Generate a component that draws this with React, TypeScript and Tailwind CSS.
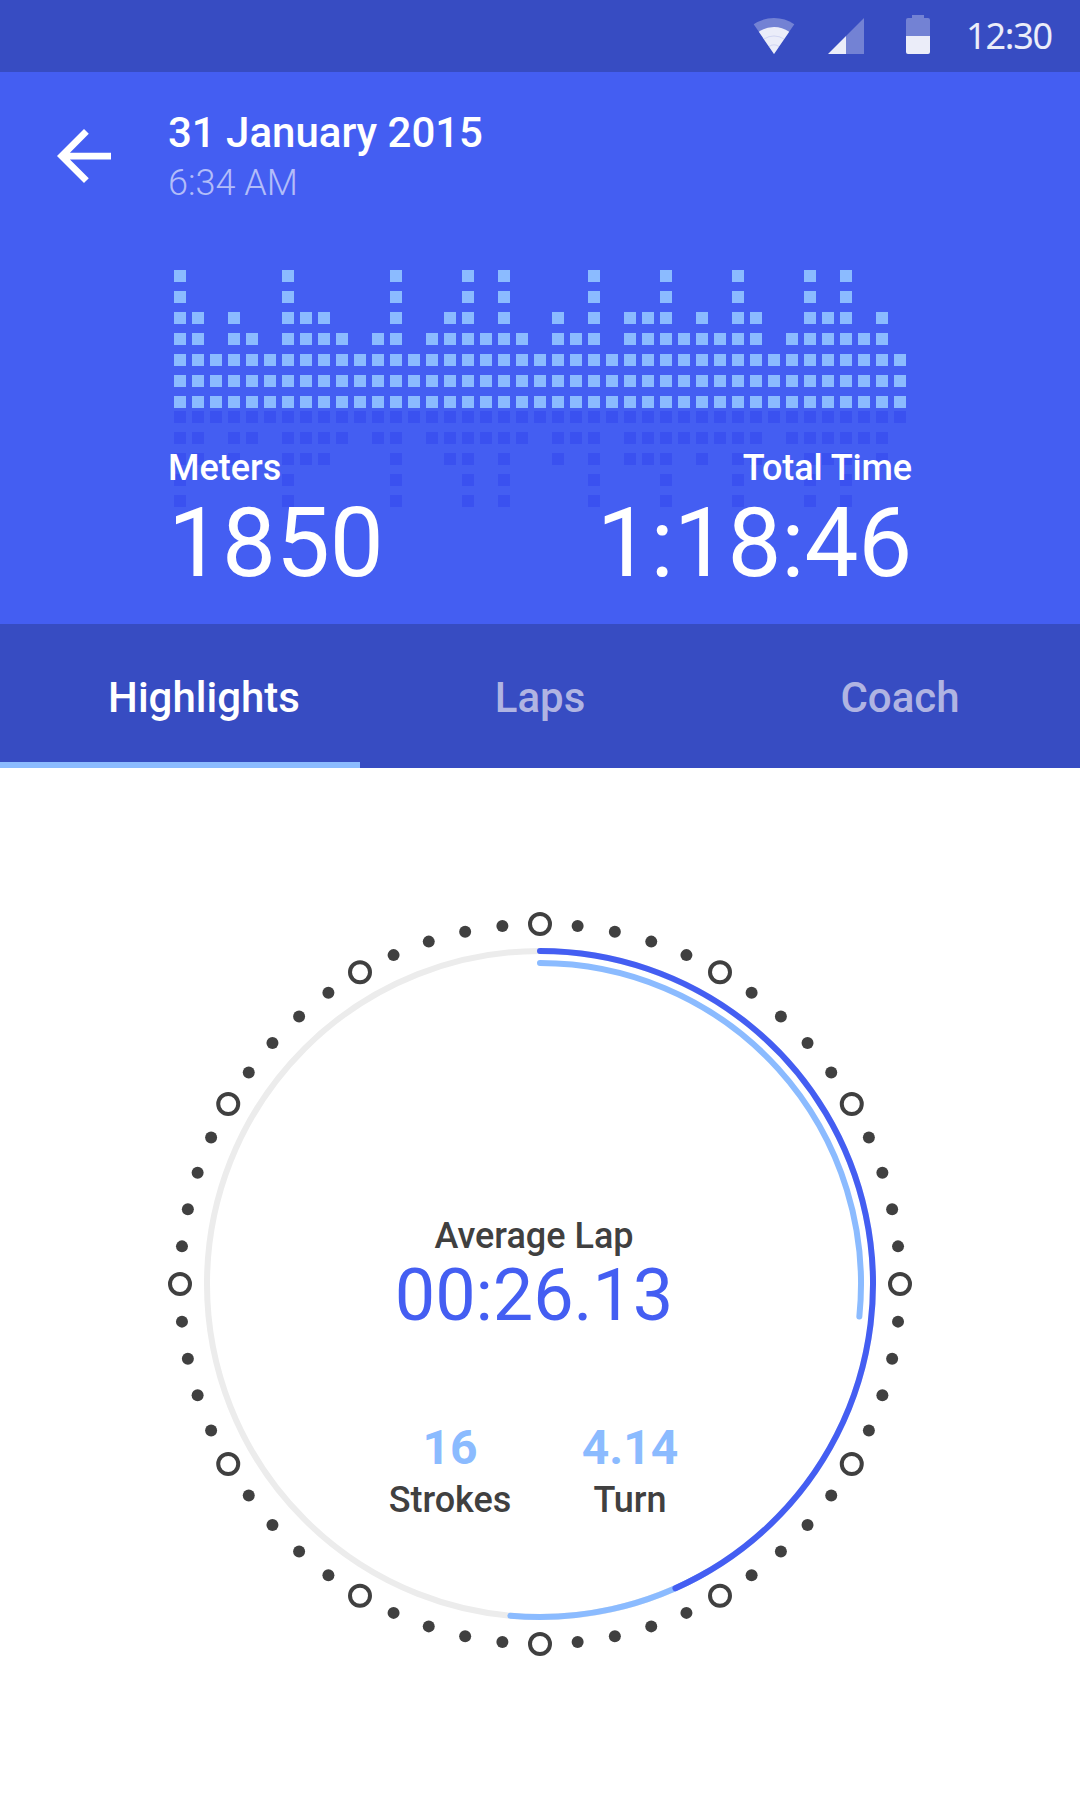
import { useState } from 'react'

const TABS = ['Highlights', 'Laps', 'Coach']

// height of every column in the activity chart, in blocks
const ACTIVITY = [
  7, 5, 3, 5, 4, 3, 7, 5, 5, 4, 3, 4, 7, 3, 4, 5, 7, 4, 7, 4, 3,
  5, 4, 7, 3, 5, 5, 7, 4, 5, 4, 7, 5, 3, 4, 7, 5, 7, 4, 5, 3,
]

const CENTER = 372

function pointAt(angle: number, radius: number) {
  const rad = (angle * Math.PI) / 180
  return { x: CENTER + radius * Math.sin(rad), y: CENTER - radius * Math.cos(rad) }
}

function arc(from: number, to: number, radius: number) {
  const a = pointAt(from, radius)
  const b = pointAt(to, radius)
  const large = to - from > 180 ? 1 : 0
  return `M${a.x} ${a.y}A${radius} ${radius} 0 ${large} 1 ${b.x} ${b.y}`
}

function StatusBar() {
  return (
    <div className="flex h-[72px] items-start justify-end bg-[#374cc2] pr-7">
      <svg className="h-[72px] w-[42px]" viewBox="0 0 42 72" fill="#fff">
        <path d="M21 54L0.7 24.3A36 36 0 0 1 41.3 24.3Z" opacity="0.3" />
        <path d="M21 54L5.8 31.7A27 27 0 0 1 36.2 31.7Z" opacity="0.86" />
        <path
          d="M11 39A18 18 0 0 1 31 39M16 46.5A9 9 0 0 1 26 46.5"
          fill="none"
          stroke="#374cc2"
          strokeWidth="0.5"
          opacity="0.3"
        />
      </svg>
      <svg className="ml-[33px] h-[72px] w-9" viewBox="0 0 36 72" fill="#fff">
        <path d="M18 36L36 18V54H18Z" opacity="0.3" />
        <path d="M0 54L18 36V54Z" opacity="0.9" />
      </svg>
      <svg className="ml-[42px] h-[72px] w-6" viewBox="0 0 24 72" fill="#fff">
        <path d="M6 15H18V18H22A2 2 0 0 1 24 20V36H0V20A2 2 0 0 1 2 18H6Z" opacity="0.3" />
        <path d="M0 36H24V52A2 2 0 0 1 22 54H2A2 2 0 0 1 0 52Z" opacity="0.9" />
      </svg>
      <span className="ml-9 w-[86px] font-['Noto_Sans',sans-serif] text-[36px] leading-[72px] tracking-[-1.2px] text-white/90">
        12:30
      </span>
    </div>
  )
}

function ActivityChart() {
  return (
    <svg className="ml-1.5 h-[237px] w-[732px] [grid-area:1/1]" viewBox="0 0 732 237" shapeRendering="crispEdges">
      {ACTIVITY.map((height, col) => (
        <g key={col}>
          {Array.from({ length: height }, (_, row) => (
            <rect key={row} x={col * 18} y={126 - row * 21} width="12" height="12" fill="#8bbbff" />
          ))}
          {Array.from({ length: height - 2 }, (_, row) => (
            <rect key={row} x={col * 18} y={141 + row * 21} width="12" height="12" fill="#3a51f0" />
          ))}
        </g>
      ))}
    </svg>
  )
}

function LapDial() {
  const marks = Array.from({ length: 60 }, (_, i) => i)

  return (
    <svg className="size-[744px] [grid-area:1/1]" viewBox="0 0 744 744" fill="none">
      <circle cx={CENTER} cy={CENTER} r="333" stroke="#ececec" strokeWidth="6" />
      <g strokeWidth="6" strokeLinecap="round">
        <path d={arc(150, 185.1, 333)} stroke="#8bbbff" />
        <path d={arc(0, 156, 333)} stroke="#445ef2" />
        <path d={arc(0, 95.8, 321)} stroke="#8bbbff" />
      </g>
      {marks.map((i) => {
        const { x, y } = pointAt(i * 6, 360)
        return i % 5 === 0 ? (
          <circle key={i} cx={x} cy={y} r="10" stroke="#404040" strokeWidth="4" />
        ) : (
          <circle key={i} cx={x} cy={y} r="6" fill="#404040" />
        )
      })}
    </svg>
  )
}

function Stat({ value, label }: { value: string; label: string }) {
  return (
    <div className="w-[180px] text-center">
      <p className="text-5xl leading-[54px] font-bold text-[#8bbbff]">{value}</p>
      <p className="mt-1 text-4xl leading-[42px] font-medium text-[#404040]">{label}</p>
    </div>
  )
}

export default function App() {
  const [activeTab, setActiveTab] = useState('Highlights')

  return (
    <div className="flex h-[1798px] w-[1080px] flex-col overflow-hidden bg-white font-[Roboto,sans-serif]">
      <StatusBar />

      <header className="h-[552px] bg-[#445ef2] text-white">
        <div className="flex h-[198px] items-start pt-[37px] pl-[57px]">
          <button type="button" aria-label="Back" className="mt-5">
            <svg className="size-[54px]" viewBox="4 4 16 16" fill="currentColor">
              <path d="M20 11H7.83l5.59-5.59L12 4l-8 8 8 8 1.41-1.41L7.83 13H20v-2z" />
            </svg>
          </button>
          <div className="ml-[57px]">
            <h1 className="text-[42px] leading-[48px] font-medium tracking-[-0.02px]">31 January 2015</h1>
            <p className="mt-[5px] text-4xl leading-[42px] font-light text-white/60">6:34 AM</p>
          </div>
        </div>

        <div className="mx-[168px] grid">
          <ActivityChart />
          <div className="mt-[177px] flex justify-between [grid-area:1/1]">
            <div>
              <p className="text-4xl leading-[42px] font-medium">Meters</p>
              <p className="mt-1.5 text-8xl leading-[96px]">1850</p>
            </div>
            <div className="text-right">
              <p className="text-4xl leading-[42px] font-medium tracking-[-0.1px]">Total Time</p>
              <p className="mt-1.5 text-8xl leading-[96px] tracking-[-0.15px]">1:18:46</p>
            </div>
          </div>
        </div>
      </header>

      <nav className="flex h-36 bg-[#374cc2]">
        {TABS.map((tab) => (
          <button
            key={tab}
            type="button"
            onClick={() => setActiveTab(tab)}
            className={
              tab === activeTab
                ? 'w-[360px] border-b-6 border-[#8bbbff] pt-[9px] pl-12 text-[42px] font-medium text-white'
                : 'w-[360px] border-b-6 border-transparent pt-[9px] text-[42px] font-medium text-[#b0b4e2]'
            }
          >
            {tab}
          </button>
        ))}
      </nav>

      <main className="grid justify-center pt-36">
        <LapDial />
        <div className="mt-[303px] flex flex-col items-center [grid-area:1/1]">
          <div className="mr-3 text-center">
            <p className="text-4xl leading-[42px] font-medium text-[#404040]">Average Lap</p>
            <p className="text-7xl leading-[78px] tracking-[-0.1px] text-[#445ef2]">00:26.13</p>
          </div>
          <div className="mt-[86px] flex">
            <Stat value="16" label="Strokes" />
            <Stat value="4.14" label="Turn" />
          </div>
        </div>
      </main>
    </div>
  )
}
